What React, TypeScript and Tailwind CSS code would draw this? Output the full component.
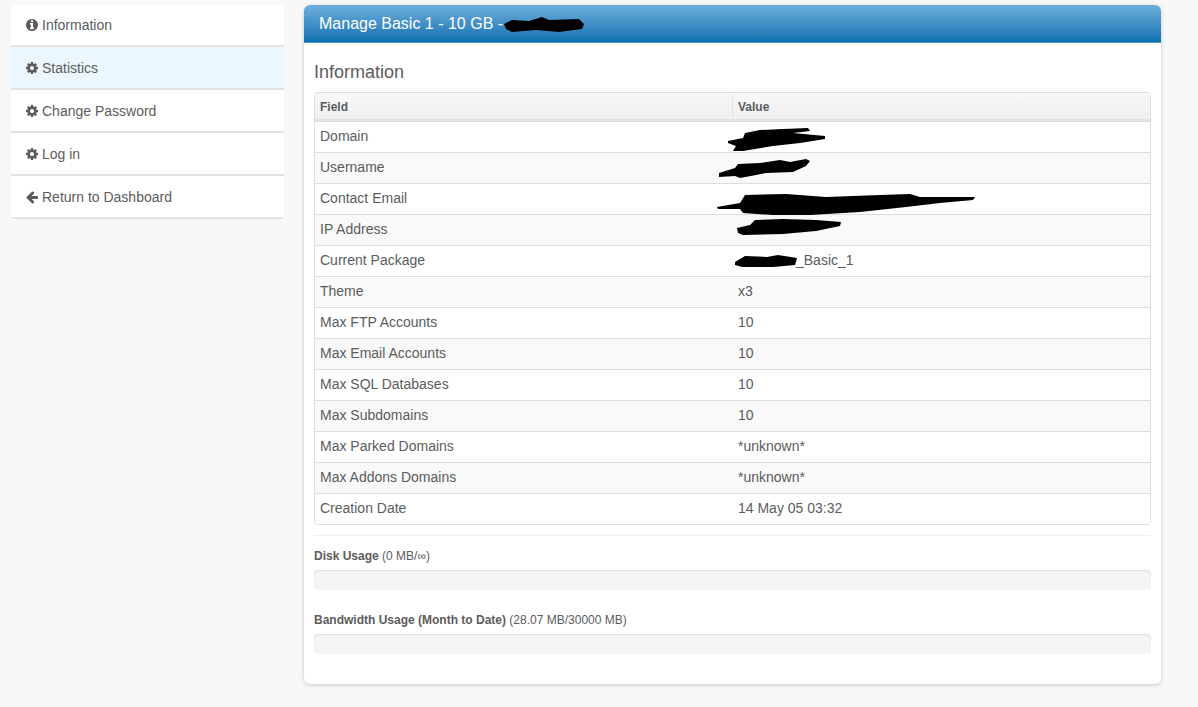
import React from 'react';

// Font Awesome 4 glyphs, the set the sidebar uses
const INFO =
  'M1152 1376v-160q0-14-9-23t-23-9h-96v-512q0-14-9-23t-23-9h-320q-14 0-23 9t-9 23v160q0 14 9 23t23 9h96v320h-96q-14 0-23 9t-9 23v160q0 14 9 23t23 9h448q14 0 23-9t9-23zm-128-896v-160q0-14-9-23t-23-9h-192q-14 0-23 9t-9 23v160q0 14 9 23t23 9h192q14 0 23-9t9-23zm640 416q0 209-103 385.5t-279.5 279.5-385.5 103-385.5-103-279.5-279.5-103-385.5 103-385.5 279.5-279.5 385.5-103 385.5 103 279.5 279.5 103 385.5z';
const COG =
  'M1152 896q0-106-75-181t-181-75-181 75-75 181 75 181 181 75 181-75 75-181zm512-109v222q0 12-8 23t-20 13l-185 28q-19 54-39 91 35 50 107 138 10 12 10 25t-9 23q-27 37-99 108t-94 71q-12 0-26-9l-138-108q-44 23-91 38-16 136-29 186-7 28-36 28h-222q-14 0-24.5-8.5t-11.5-21.5l-28-184q-49-16-90-37l-141 107q-10 9-25 9-14 0-25-11-126-114-165-168-7-10-7-23 0-12 8-23 15-21 51-66.5t54-70.5q-27-50-41-99l-183-27q-13-2-21-12.5t-8-23.5v-222q0-12 8-23t19-13l186-28q14-46 39-92-40-57-107-138-10-12-10-24 0-10 9-23 26-36 98.5-107.5t94.5-71.5q13 0 26 10l138 107q44-23 91-38 16-136 29-186 7-28 36-28h222q14 0 24.5 8.5t11.5 21.5l28 184q49 16 90 37l142-107q9-9 24-9 13 0 25 10 129 119 165 170 7 8 7 22 0 12-8 23-15 21-51 66.5t-54 70.5q26 50 41 98l183 28q13 2 21 12.5t8 23.5z';
const ARROW =
  'M1664 896v128q0 53-32.5 90.5t-84.5 37.5h-704l293 294q38 36 38 90t-38 90l-75 76q-37 37-90 37-52 0-91-37l-651-652q-37-37-37-90 0-52 37-91l651-650q38-38 91-38 52 0 90 38l75 74q38 38 38 91t-38 91l-293 293h704q52 0 84.5 37.5t32.5 90.5z';

const NAV = [
  { label: 'Information', icon: INFO },
  { label: 'Statistics', icon: COG, active: true },
  { label: 'Change Password', icon: COG },
  { label: 'Log in', icon: COG },
  { label: 'Return to Dashboard', icon: ARROW },
];

const ROWS = [
  ['Domain', ''],
  ['Username', ''],
  ['Contact Email', ''],
  ['IP Address', ''],
  ['Current Package', '_Basic_1'],
  ['Theme', 'x3'],
  ['Max FTP Accounts', '10'],
  ['Max Email Accounts', '10'],
  ['Max SQL Databases', '10'],
  ['Max Subdomains', '10'],
  ['Max Parked Domains', '*unknown*'],
  ['Max Addons Domains', '*unknown*'],
  ['Creation Date', '14 May 05 03:32'],
];

// Marker scribbles that hide private values in the table
function Scribble({ className, d, w, h }: { className: string; d: string; w: number; h: number }) {
  return (
    <svg className={`absolute ${className}`} width={w} height={h} viewBox={`0 0 ${w} ${h}`}>
      <path d={d} fill="#000" />
    </svg>
  );
}

function Usage({ label, value }: { label: string; value: string }) {
  return (
    <div>
      <p className="text-xs leading-[17px]">
        <b>{label}</b> ({value})
      </p>
      <div className="mt-[5px] h-5 rounded bg-[#f5f5f5] shadow-[inset_0_1px_2px_rgba(0,0,0,0.1)]" />
    </div>
  );
}

export default function App() {
  return (
    <div className="flex h-[707px] items-start overflow-hidden bg-[#f8f8f8] pl-[11px] pt-[5px] font-['Liberation_Sans',Arial,sans-serif] text-sm text-[#5c5c5c]">
      {/* Sidebar */}
      <nav className="w-[273px] shrink-0 overflow-hidden rounded bg-white">
        {NAV.map((item) => (
          <a
            key={item.label}
            className={`flex h-[43px] items-center gap-[3px] border-b-2 border-[#e3e3e3] pl-[14px] first:h-[42px] ${
              item.active ? 'bg-[#ecf6fe]' : 'bg-white'
            }`}
          >
            <svg width="14" height="14" viewBox="0 0 1792 1792" className="shrink-0">
              <path d={item.icon} fill="#5c5c5c" />
            </svg>
            {item.label}
          </a>
        ))}
      </nav>

      {/* Main panel */}
      <main className="ml-5 h-[679px] w-[857px] shrink-0 overflow-hidden rounded-md bg-white shadow-[0_1px_4px_rgba(0,0,0,0.2)]">
        <div className="relative flex h-[38px] items-center border-b border-[#4f9fd0] bg-gradient-to-b from-[#6db0dd] to-[#0570b0] px-[15px] text-base text-white">
          Manage Basic 1 - 10 GB -
          <Scribble
            className="left-[200px] top-[12px]"
            w={81}
            h={16}
            d="M0 7 L8 3 L25 4 L38 0 L45 3 L75 2 L80 7 L78 12 L55 15 L32 13 L8 15 L2 12 Z"
          />
        </div>

        <div className="px-[10px]">
          <h3 className="mt-[19px] text-lg leading-[20px]">Information</h3>

          <div className="relative mt-[10px] overflow-hidden rounded border border-[#ddd]">
            <div className="flex h-[28px] items-center border-b-2 border-[#e3e3e3] bg-gradient-to-b from-[#f8f8f8] to-[#efefef] pt-[2px] text-xs font-bold">
              <div className="flex h-full w-[418px] items-center border-r border-[#e3e3e3] pl-[5px]">Field</div>
              <div className="pl-[5px]">Value</div>
            </div>
            {ROWS.map(([field, value], i) => (
              <div
                key={field}
                className={`flex h-[31px] items-center border-t border-[#ddd] pb-[2px] first:border-t-0 ${
                  i % 2 === 1 ? 'bg-[#f9f9f9]' : 'bg-white'
                }`}
              >
                <div className="w-[418px] pl-[5px]">{field}</div>
                <div className="pl-[5px]">
                  {field === 'Current Package' ? <span className="pl-[58px]">{value}</span> : value}
                </div>
              </div>
            ))}
            <Scribble
              className="left-[413px] top-[35px]"
              w={98}
              h={24}
              d="M0 13 L15 10 L17 5 L32 2 L55 1 L80 0 L82 3 L65 5 L97 8 L97 11 L72 15 L45 18 L15 23 L5 23 L8 18 L0 15 Z"
            />
            <Scribble
              className="left-[404px] top-[66px]"
              w={92}
              h={20}
              d="M0 14 L16 9 L19 5 L41 4 L61 1 L71 3 L87 0 L91 2 L87 7 L74 13 L47 14 L21 19 L16 17 L0 18 Z"
            />
            <Scribble
              className="left-[402px] top-[101px]"
              w={259}
              h={22}
              d="M0 13 L23 9 L28 1 L69 0 L109 3 L163 1 L193 0 L203 3 L258 3 L256 6 L223 9 L189 13 L143 18 L93 21 L56 21 L26 19 L23 15 L1 15 Z"
            />
            <Scribble
              className="left-[422px] top-[126px]"
              w={105}
              h={17}
              d="M0 9 L13 6 L18 1 L46 0 L79 1 L104 3 L103 7 L79 12 L46 15 L6 16 L1 14 Z"
            />
            <Scribble
              className="left-[420px] top-[162px]"
              w={63}
              h={13}
              d="M0 7 L10 1 L32 2 L43 0 L62 3 L60 10 L38 12 L7 12 L0 10 Z"
            />
          </div>

          <hr className="mt-[10px] border-[#eee]" />

          <div className="mt-[12px] flex flex-col gap-[22px]">
            <Usage label="Disk Usage" value="0 MB/∞" />
            <Usage label="Bandwidth Usage (Month to Date)" value="28.07 MB/30000 MB" />
          </div>
        </div>
      </main>
    </div>
  );
}
